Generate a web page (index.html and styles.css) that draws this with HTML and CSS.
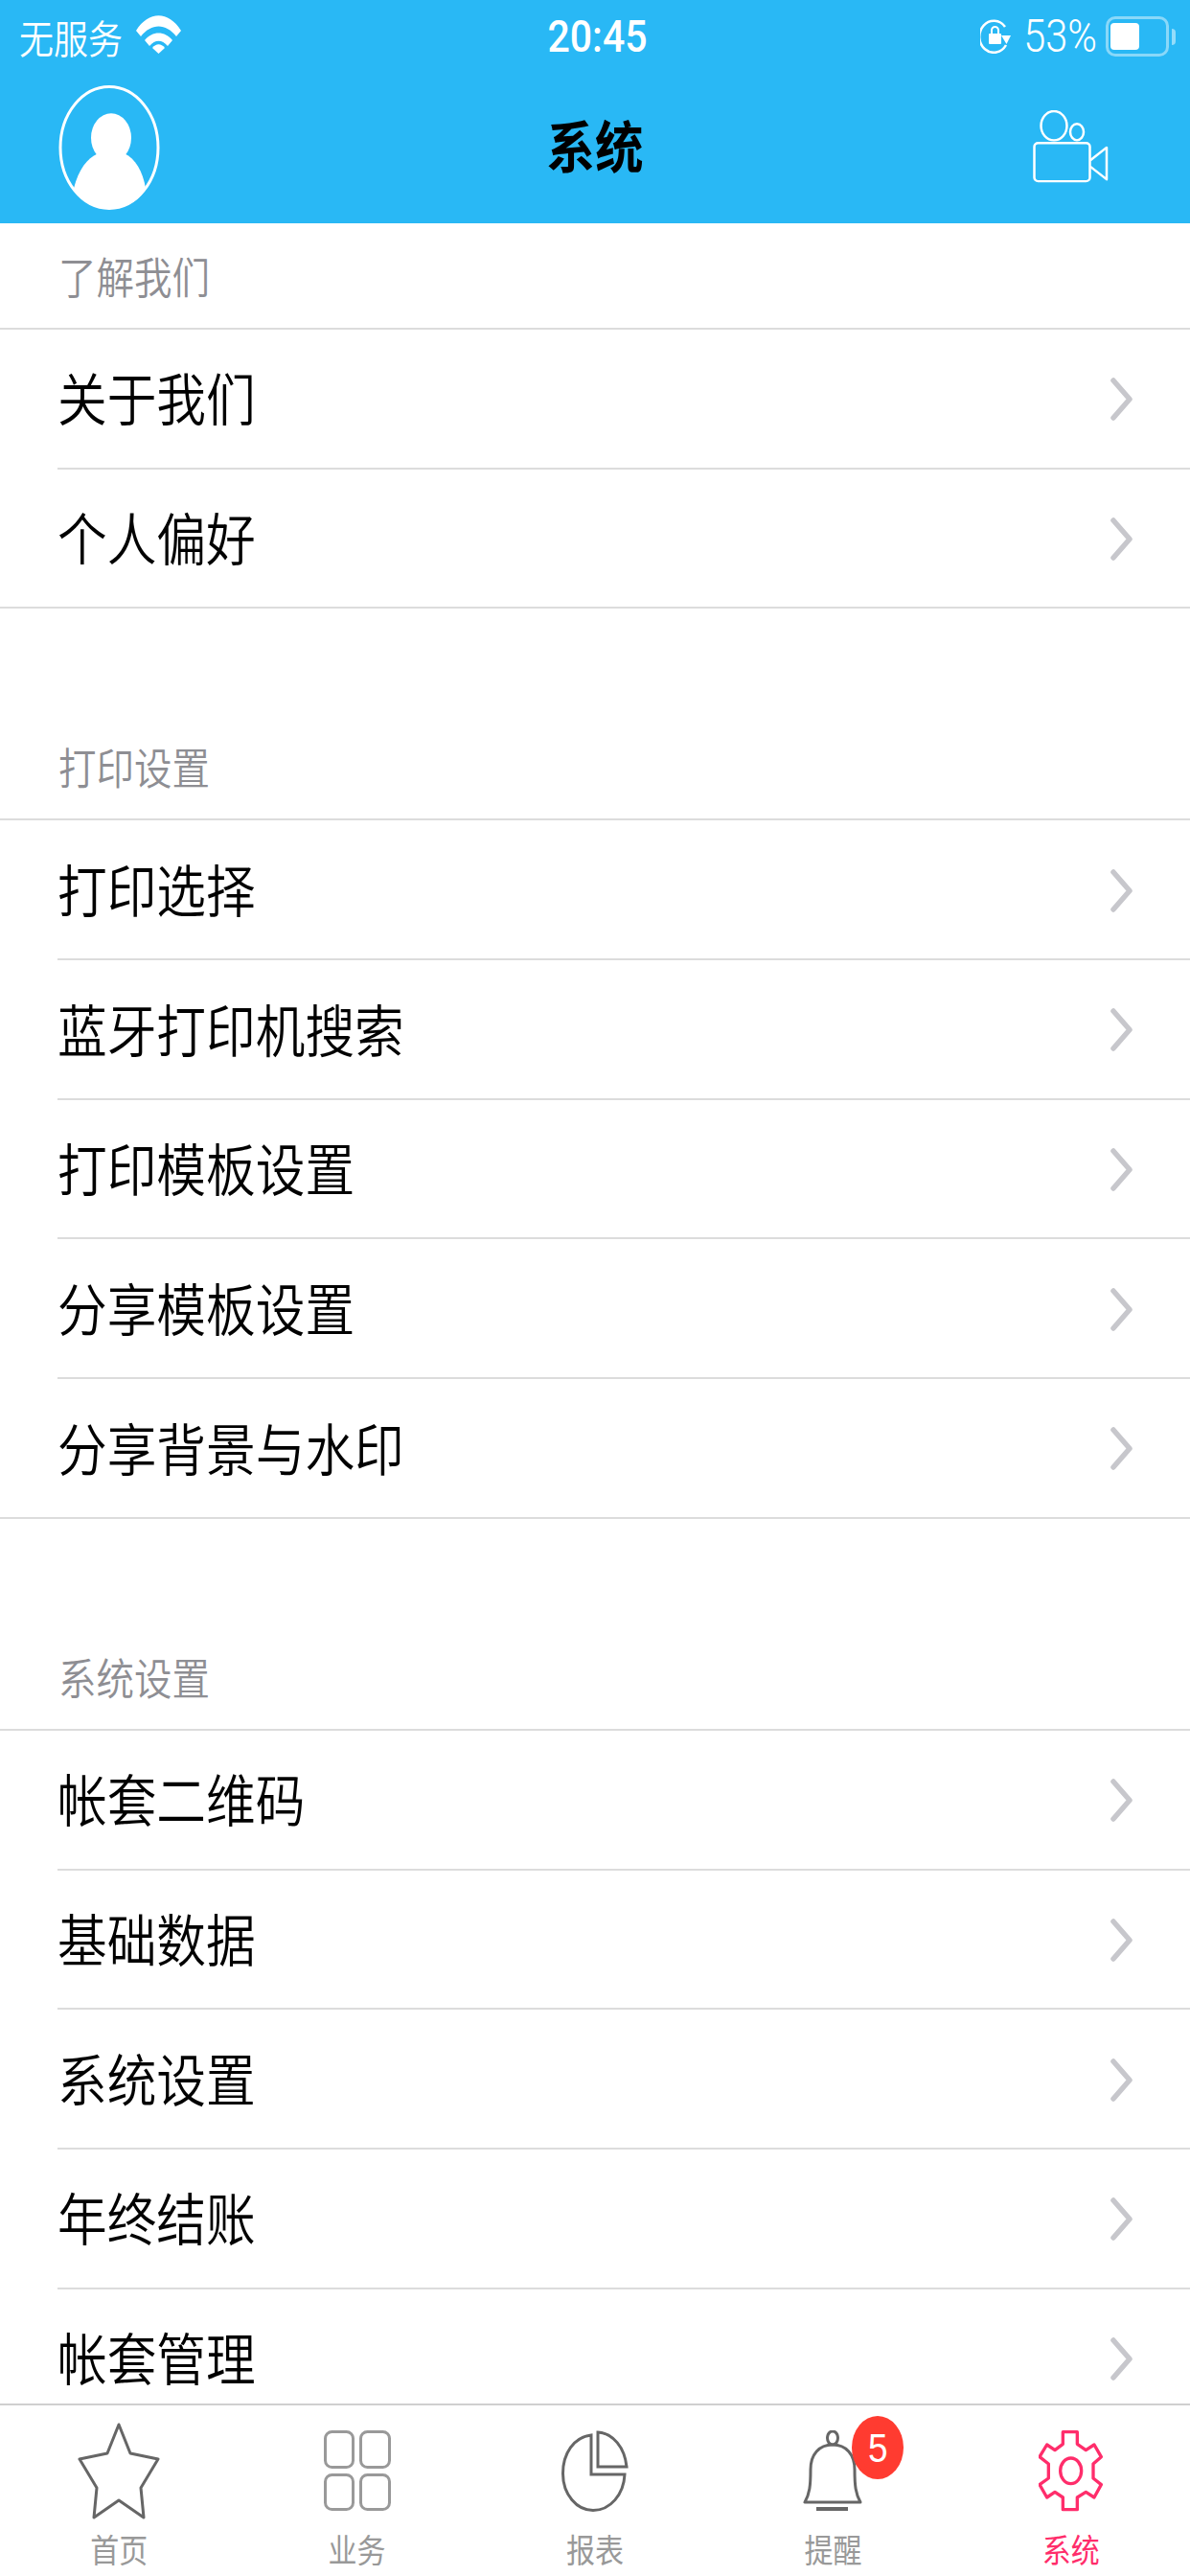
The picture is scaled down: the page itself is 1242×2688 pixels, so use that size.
FILE: index.html
```html
<!DOCTYPE html>
<html lang="zh-CN">
<head>
<meta charset="utf-8">
<title>系统</title>
<link rel="stylesheet" href="styles.css">
</head>
<body>
<div class="page">
  <header class="header">
    <div class="status">
      <div class="status-left">
        <span class="tall carrier">无服务</span>
        <svg class="wifi" width="47" height="41" viewBox="0 0 47 41"><path d="M0 16 C13 -5 34 -5 47 16 L42 22 C31 8 16 8 5 22 Z" fill="#fff"/><path d="M9 26 C17 16 30 16 38 26 L33 32 C27 25 20 25 14 32 Z" fill="#fff"/><path d="M17 35 C21 30 26 30 30 35 L23.500 41 Z" fill="#fff" transform="translate(0 -1)"/></svg>
      </div>
      <div class="tall time">20:45</div>
      <div class="status-right">
        <svg class="lock" width="32" height="36" viewBox="0 0 32 36"><path d="M26 8 A15 16.500 0 1 0 27 27" fill="none" stroke="#fff" stroke-width="2.500"/><path d="M22 17 H32 L27.500 26 Z" fill="#fff"/><rect x="9" y="15" width="13" height="11" rx="1" fill="#fff"/><path d="M12 15 V11.500 A3.500 3.500 0 0 1 19 11.500 V15" fill="none" stroke="#fff" stroke-width="2"/></svg>
        <span class="tall percent">53%</span>
        <div class="battery"><div class="battery-fill"></div></div>
        <div class="battery-nub"></div>
      </div>
    </div>
    <nav class="nav">
      <svg class="avatar" width="106" height="130" viewBox="0 0 106 133" preserveAspectRatio="none"><ellipse cx="53" cy="66.500" rx="51" ry="65" fill="none" stroke="#fff" stroke-width="3"/><ellipse cx="55" cy="56" rx="21" ry="26" fill="#fff"/><path d="M16 110 C21 90 30 78 41 73 H69 C80 78 88 92 91 110 C84 125 68 131 53 131 C37 131 24 125 16 110 Z" fill="#fff"/></svg>
      <h1 class="tall title">系统</h1>
      <svg class="camera" width="79" height="76" viewBox="0 0 79 80" preserveAspectRatio="none"><ellipse cx="22" cy="17" rx="13.500" ry="16" fill="none" stroke="#fff" stroke-width="2.500"/><ellipse cx="46" cy="24" rx="7" ry="9" fill="none" stroke="#fff" stroke-width="2.500"/><rect x="1.500" y="36" width="58" height="42" rx="4" fill="none" stroke="#fff" stroke-width="2.500"/><path d="M60 55 L77 41 V76 L60 62" fill="none" stroke="#fff" stroke-width="2.500" stroke-linejoin="round"/></svg>
    </nav>
  </header>

  <main class="content">
    <section class="group">
      <h2 class="group-title"><span class="tall">了解我们</span></h2>
      <a class="row"><span class="tall">关于我们</span><svg class="chevron" width="23" height="45" viewBox="0 0 23 45"><path d="M3 3 L20 22.500 L3 42" fill="none" stroke="#c7c7cc" stroke-width="5.500" stroke-linecap="round" stroke-linejoin="round"/></svg></a>
      <a class="row"><span class="tall">个人偏好</span><svg class="chevron" width="23" height="45" viewBox="0 0 23 45"><path d="M3 3 L20 22.500 L3 42" fill="none" stroke="#c7c7cc" stroke-width="5.500" stroke-linecap="round" stroke-linejoin="round"/></svg></a>
    </section>
    <section class="group">
      <h2 class="group-title"><span class="tall">打印设置</span></h2>
      <a class="row"><span class="tall">打印选择</span><svg class="chevron" width="23" height="45" viewBox="0 0 23 45"><path d="M3 3 L20 22.500 L3 42" fill="none" stroke="#c7c7cc" stroke-width="5.500" stroke-linecap="round" stroke-linejoin="round"/></svg></a>
      <a class="row"><span class="tall">蓝牙打印机搜索</span><svg class="chevron" width="23" height="45" viewBox="0 0 23 45"><path d="M3 3 L20 22.500 L3 42" fill="none" stroke="#c7c7cc" stroke-width="5.500" stroke-linecap="round" stroke-linejoin="round"/></svg></a>
      <a class="row"><span class="tall">打印模板设置</span><svg class="chevron" width="23" height="45" viewBox="0 0 23 45"><path d="M3 3 L20 22.500 L3 42" fill="none" stroke="#c7c7cc" stroke-width="5.500" stroke-linecap="round" stroke-linejoin="round"/></svg></a>
      <a class="row"><span class="tall">分享模板设置</span><svg class="chevron" width="23" height="45" viewBox="0 0 23 45"><path d="M3 3 L20 22.500 L3 42" fill="none" stroke="#c7c7cc" stroke-width="5.500" stroke-linecap="round" stroke-linejoin="round"/></svg></a>
      <a class="row"><span class="tall">分享背景与水印</span><svg class="chevron" width="23" height="45" viewBox="0 0 23 45"><path d="M3 3 L20 22.500 L3 42" fill="none" stroke="#c7c7cc" stroke-width="5.500" stroke-linecap="round" stroke-linejoin="round"/></svg></a>
    </section>
    <section class="group">
      <h2 class="group-title"><span class="tall">系统设置</span></h2>
      <a class="row"><span class="tall">帐套二维码</span><svg class="chevron" width="23" height="45" viewBox="0 0 23 45"><path d="M3 3 L20 22.500 L3 42" fill="none" stroke="#c7c7cc" stroke-width="5.500" stroke-linecap="round" stroke-linejoin="round"/></svg></a>
      <a class="row"><span class="tall">基础数据</span><svg class="chevron" width="23" height="45" viewBox="0 0 23 45"><path d="M3 3 L20 22.500 L3 42" fill="none" stroke="#c7c7cc" stroke-width="5.500" stroke-linecap="round" stroke-linejoin="round"/></svg></a>
      <a class="row"><span class="tall">系统设置</span><svg class="chevron" width="23" height="45" viewBox="0 0 23 45"><path d="M3 3 L20 22.500 L3 42" fill="none" stroke="#c7c7cc" stroke-width="5.500" stroke-linecap="round" stroke-linejoin="round"/></svg></a>
      <a class="row"><span class="tall">年终结账</span><svg class="chevron" width="23" height="45" viewBox="0 0 23 45"><path d="M3 3 L20 22.500 L3 42" fill="none" stroke="#c7c7cc" stroke-width="5.500" stroke-linecap="round" stroke-linejoin="round"/></svg></a>
      <a class="row"><span class="tall">帐套管理</span><svg class="chevron" width="23" height="45" viewBox="0 0 23 45"><path d="M3 3 L20 22.500 L3 42" fill="none" stroke="#c7c7cc" stroke-width="5.500" stroke-linecap="round" stroke-linejoin="round"/></svg></a>
    </section>
  </main>

  <footer class="tabbar">
    <a class="tab">
      <div class="tab-icon"><svg width="86" height="101" viewBox="0 0 86 101"><path d="M43 2 L55 32 L84 38 L66 68 L69 99 L43 81 L17 99 L20 68 L2 38 L31 32 Z" fill="none" stroke="#666" stroke-width="3" stroke-linejoin="round"/></svg></div>
      <span class="tall tab-label">首页</span>
    </a>
    <a class="tab">
      <div class="tab-icon"><svg width="70" height="84" viewBox="0 0 70 84"><g fill="none" stroke="#999" stroke-width="3"><rect x="1.500" y="1.500" width="29" height="37" rx="7"/><rect x="38.500" y="1.500" width="30" height="37" rx="7"/><rect x="1.500" y="46.500" width="29" height="36" rx="7"/><rect x="38.500" y="46.500" width="30" height="36" rx="7"/></g></svg></div>
      <span class="tall tab-label">业务</span>
    </a>
    <a class="tab">
      <div class="tab-icon"><svg width="70" height="85" viewBox="0 0 70 85"><g fill="none" stroke="#666" stroke-width="3"><path d="M31 5 C13 7 1.500 24 1.500 45 C1.500 67 16 83.500 33 83.500 C51 83.500 65 67 66 46 H31 Z"/><path d="M38 2 C54 3 66 18 68 38 H38 Z"/></g></svg></div>
      <span class="tall tab-label">报表</span>
    </a>
    <a class="tab">
      <div class="tab-icon"><svg width="62" height="85" viewBox="0 0 62 85"><g fill="none" stroke="#666" stroke-width="3"><ellipse cx="31" cy="8" rx="5.500" ry="7"/><path d="M31 15 C17 15 8 25 8 41 C8 58 7 66 2 75 H60 C55 66 54 58 54 41 C54 25 45 15 31 15 Z" stroke-linejoin="round"/></g><rect x="14" y="80" width="33" height="4" fill="#666"/></svg></div>
      <span class="tall tab-label">提醒</span>
      <span class="badge"><span class="tall">5</span></span>
    </a>
    <a class="tab tab-active">
      <div class="tab-icon"><svg width="68" height="86" viewBox="0 0 204 258"><g transform="translate(-39 -42)" fill="none" stroke="#ff2d6b" stroke-width="10" stroke-linejoin="round"><path d="M115 88 V50 H160 V88 L187 107 L213 90 L235 128 L210 150 V195 L235 215 L213 255 L187 238 L160 255 V293 H115 V255 L90 238 L65 255 L42 215 L70 195 V150 L42 128 L65 90 L90 107 Z"/><ellipse cx="140" cy="172" rx="33" ry="40"/></g></svg></div>
      <span class="tall tab-label">系统</span>
    </a>
  </footer>
</div>
</body>
</html>
```
FILE: styles.css
```css
* { box-sizing: border-box; }
html, body { margin: 0; padding: 0; }
body { background: #fff; font-family: "Noto Sans CJK SC", "Noto Sans", sans-serif; }
.page { width: 1242px; height: 2688px; display: flex; flex-direction: column; overflow: hidden; }
.tall { display: inline-block; transform: scaleY(1.14); }

.header { height: 233px; background: #29b8f5; color: #fff; flex: none; }
.status { height: 76px; display: grid; grid-template-columns: 1fr auto 1fr; align-items: center; padding: 0 15px 0 20px; }
.status-left { display: flex; align-items: center; gap: 14px; }
.carrier { font-size: 36px; font-weight: 350; line-height: 1; }
.wifi { margin-top: -4px; }
.time { font-family: Roboto, sans-serif; font-size: 41px; font-weight: 500; line-height: 1; }
.status-right { display: flex; align-items: center; justify-content: flex-end; }
.lock { margin-right: 13px; }
.percent { font-family: Roboto, sans-serif; font-size: 41.500px; font-weight: 300; line-height: 1; margin-right: 9px; }
.battery { width: 66px; height: 42px; border: 3px solid rgba(255,255,255,.45); border-radius: 10px; padding: 4px 2px; }
.battery-fill { width: 30px; height: 28px; background: #fff; border-radius: 4px; }
.battery-nub { width: 4px; height: 17px; margin-left: 3px; background: rgba(255,255,255,.5); border-radius: 0 8px 8px 0; }

.nav { height: 157px; position: relative; display: flex; align-items: flex-start; justify-content: space-between; padding: 13px 85px 0 61px; }
.title { position: absolute; left: 0; right: 0; top: 39px; margin: 0; text-align: center; color: #000; font-size: 50.500px; font-weight: 700; line-height: 70px; }
.camera { margin-top: 26px; }

.content { flex: 1; min-height: 0; overflow: hidden; }
.group { margin-bottom: 110px; }
.group-title { height: 111px; margin: 0; display: flex; align-items: center; padding-left: 61px; border-bottom: 2px solid #dcdcdc; color: #8e8e93; font-size: 39.500px; font-weight: 350; }
.group-title .tall { line-height: 1; }
.row { height: 145.700px; display: flex; align-items: center; justify-content: space-between; margin-left: 60px; padding-right: 60px; border-bottom: 2px solid #dcdcdc; color: #000; font-size: 51.700px; font-weight: 350; line-height: 1; }
.row .tall { margin-bottom: 3px; }
.row:last-child { margin-left: 0; padding-left: 60px; }
.chevron { flex: none; margin-top: 2px; }

.tabbar { height: 180px; flex: none; display: grid; grid-template-columns: repeat(5, 1fr); background: #fff; border-top: 2px solid #cfcfcf; }
.tab { position: relative; display: flex; flex-direction: column; align-items: center; padding-top: 16px; color: #999; }
.tab-icon { height: 104px; display: flex; align-items: center; justify-content: center; }
.tab-label { margin-top: 11px; font-size: 30px; font-weight: 400; line-height: 36px; }
.tab-active { color: #ff2d6b; }
.badge { position: absolute; left: 144px; top: 11px; width: 54px; height: 66px; border-radius: 50%; background: #ff3b30; color: #fff; display: flex; align-items: center; justify-content: center; font-family: "Liberation Sans", sans-serif; font-size: 37px; line-height: 1; }
```
